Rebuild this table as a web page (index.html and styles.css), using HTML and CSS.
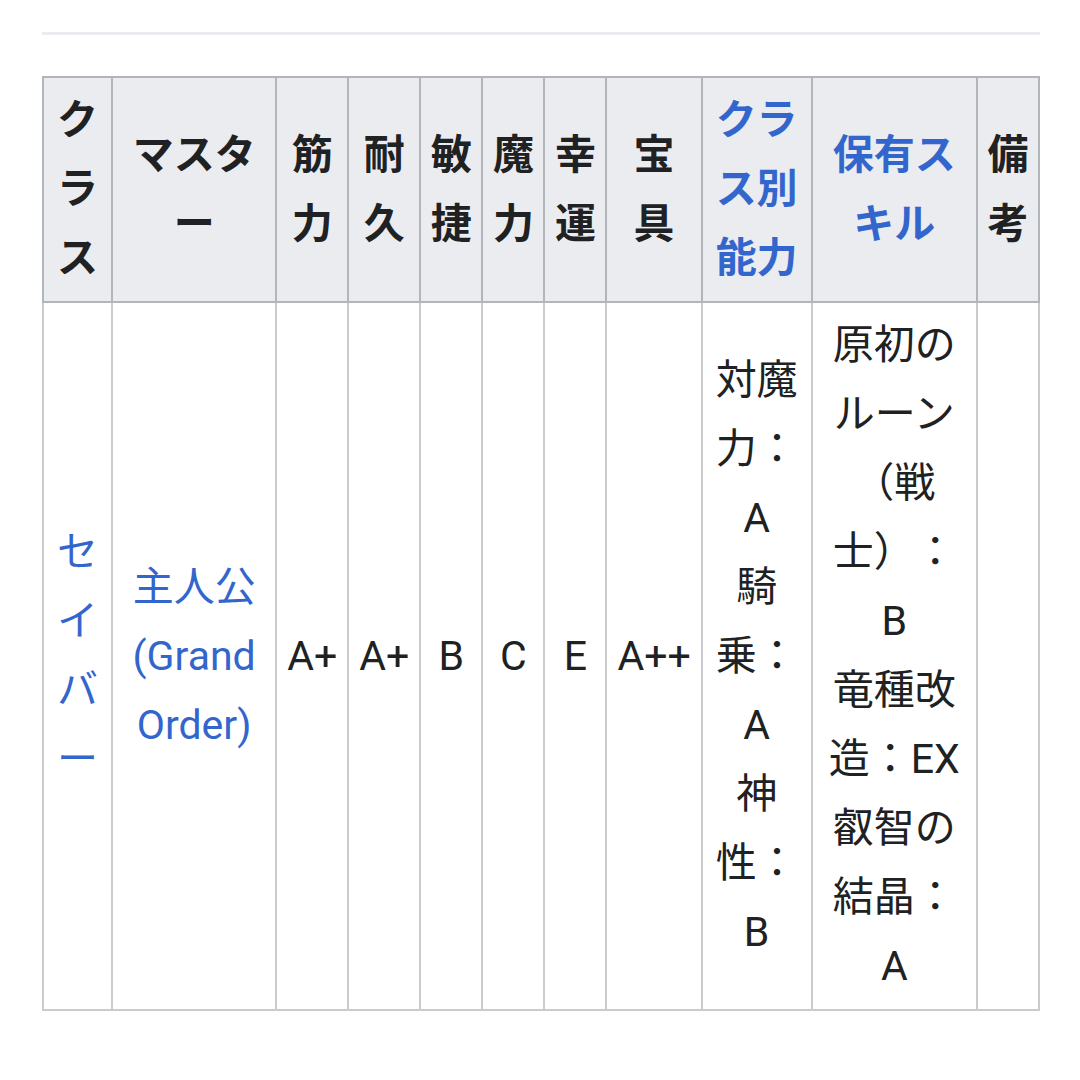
FILE: index.html
```html
<!DOCTYPE html>
<html lang="ja">

<head>
    <meta charset="UTF-8">
    <meta name="viewport" content="width=device-width, initial-scale=1.0">
    <title>サーヴァント</title>
    <link rel="stylesheet" href="styles.css">
</head>

<body>

    <div class="pagina">
        <div class="regla"></div>

        <table class="tablaWiki">
            <colgroup>
                <col class="colClase">
                <col class="colMaster">
                <col class="colStat">
                <col class="colStat">
                <col class="colChica">
                <col class="colChica">
                <col class="colChica">
                <col class="colHogu">
                <col class="colHabClase">
                <col class="colSkill">
                <col class="colChica">
            </colgroup>
            <thead>
                <tr>
                    <th>クラス</th>
                    <th>マスター</th>
                    <th>筋力</th>
                    <th>耐久</th>
                    <th>敏捷</th>
                    <th>魔力</th>
                    <th>幸運</th>
                    <th>宝具</th>
                    <th><a href="#">クラス別能力</a></th>
                    <th><a href="#">保有スキル</a></th>
                    <th>備考</th>
                </tr>
            </thead>
            <tbody>
                <tr>
                    <td><a href="#">セイバー</a></td>
                    <td><a href="#">主人公 (Grand Order)</a></td>
                    <td>A+</td>
                    <td>A+</td>
                    <td>B</td>
                    <td>C</td>
                    <td>E</td>
                    <td>A++</td>
                    <td>対魔力：A<br>騎乗：A<br>神性：B</td>
                    <td class="celdaSkill">原初のルーン（戦士）：B<br>竜種改造：EX<br>叡智の結晶：A</td>
                    <td></td>
                </tr>
            </tbody>
        </table>
    </div>

</body>

</html>
```

FILE: styles.css
```css
body {
    margin: 0;
    background-color: #ffffff;
    font-family: Roboto, "Noto Sans CJK JP", sans-serif;
    color: #202122;
}

.pagina {
    padding: 32px 40px 0 42px;
}

/* linea gris encima de la tabla */
.regla {
    height: 3px;
    background-color: #eaecf0;
    margin-bottom: 41px;
}

.tablaWiki {
    width: 100%;
    table-layout: fixed;
    border-collapse: collapse;
    font-size: 41px;
    line-height: 69px;
    line-break: normal;
    text-spacing-trim: space-all;
    text-align: center;
}

.tablaWiki a {
    color: #3366cc;
    text-decoration: none;
}

.colClase { width: 69px; }
.colMaster { width: 164px; }
.colStat { width: 72px; }
.colChica { width: 62px; }
.colHogu { width: 95px; }
.colHabClase { width: 110px; }
.colSkill { width: 165px; }

.tablaWiki th,
.tablaWiki td {
    padding: 8px 7px;
    vertical-align: middle;
    word-wrap: break-word;
}

.tablaWiki th {
    background-color: #eaecf0;
    border: 2px solid #b2b6bb;
    font-weight: bold;
}

.tablaWiki td {
    border: 2px solid #c8ccd1;
    font-weight: normal;
}

.tablaWiki td.celdaSkill {
    padding: 8px 10px;
}
```
